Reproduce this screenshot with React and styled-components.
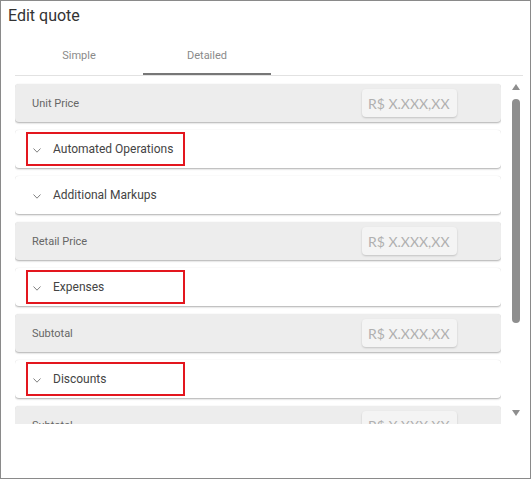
import React from "react";
import styled, { createGlobalStyle } from "styled-components";

const Global = createGlobalStyle`
  html, body { margin: 0; padding: 0; background: #fff; }
  body { font-family: Roboto, "Noto Sans", Arial, sans-serif; }
  * { box-sizing: border-box; }
`;

const Dialog = styled.div`
  width: 531px;
  height: 479px;
  border: 1px solid #8a8a8a;
  background: #fff;
  display: flex;
  flex-direction: column;
`;

const Title = styled.h2`
  margin: 0;
  padding: 5px 0 0 7px;
  height: 34px;
  font-size: 16px;
  line-height: 20px;
  font-weight: 400;
  color: #333;
`;

const TabStrip = styled.div`
  display: flex;
  margin: 0 7px 0 14px;
  border-bottom: 1px solid #e2e2e2;
`;

const Tab = styled.div`
  position: relative;
  width: 128px;
  height: 40px;
  display: flex;
  align-items: center;
  justify-content: center;
  font-size: 11px;
  color: #8a8a8a;
  &::after {
    content: "";
    position: absolute;
    left: 0;
    right: 0;
    bottom: 0;
    height: 2px;
    background: ${(p) => (p.$active ? "#777" : "transparent")};
  }
`;

const Body = styled.div`
  display: flex;
  height: 348px;
  margin: 0 6px 0 14px;
  gap: 7px;
`;

const List = styled.div`
  width: 486px;
  overflow: hidden;
  padding-top: 8px;
  display: flex;
  flex-direction: column;
  gap: 8px;
`;

const Row = styled.div`
  flex: 0 0 38px;
  height: 38px;
  border-radius: 4px;
  background: ${(p) => (p.$gray ? "#ededed" : "#fff")};
  box-shadow: 0 1px 2px rgba(0, 0, 0, 0.32), 0 0 1px rgba(0, 0, 0, 0.07);
  display: flex;
  align-items: center;
`;

const PriceRow = styled(Row)`
  justify-content: space-between;
  padding: 0 44px 0 17px;
`;

const Label = styled.span`
  font-size: 11px;
  color: #666;
`;

const PriceBox = styled.div`
  width: 95px;
  height: 28px;
  border-radius: 4px;
  background: #f4f4f4;
  box-shadow: 0 1px 2px rgba(0, 0, 0, 0.18);
  display: flex;
  align-items: center;
  padding-left: 6px;
  font-family: Lato, "Open Sans", sans-serif;
  font-size: 14px;
  color: #b0b0b0;
  white-space: nowrap;
  overflow: hidden;
`;

const Summary = styled.div`
  margin-left: 11px;
  width: 159px;
  height: 34px;
  border: 2px solid ${(p) => (p.$highlight ? "#e3161e" : "transparent")};
  display: flex;
  align-items: center;
  padding-left: 5px;
  gap: 12px;
`;

const Chevron = styled.svg`
  width: 8px;
  height: 5px;
  margin-top: 3px;
  flex: 0 0 auto;
`;

const SummaryText = styled.span`
  font-size: 12px;
  color: #444;
  white-space: nowrap;
`;

const Scrollbar = styled.div`
  width: 16px;
  display: flex;
  flex-direction: column;
  align-items: center;
  padding: 8px 0 8px;
`;

const Arrow = styled.svg`
  width: 8px;
  height: 6px;
  flex: 0 0 auto;
`;

const Thumb = styled.div`
  width: 8px;
  height: 224px;
  margin-top: 9px;
  border-radius: 4px;
  background: #8e8e8e;
`;

const Spacer = styled.div`
  flex: 1;
`;

const Price = ({ label }) => (
  <PriceRow $gray>
    <Label>{label}</Label>
    <PriceBox>R$ X.XXX,XX</PriceBox>
  </PriceRow>
);

const Accordion = ({ label, highlight }) => (
  <Row>
    <Summary $highlight={highlight}>
      <Chevron viewBox="0 0 8 5">
        <polyline points="0.5,0.5 4,4.2 7.5,0.5" fill="none" stroke="#808080" strokeWidth="1" />
      </Chevron>
      <SummaryText>{label}</SummaryText>
    </Summary>
  </Row>
);

export default function App() {
  return (
    <>
      <Global />
      <Dialog>
        <Title>Edit quote</Title>
        <TabStrip>
          <Tab>Simple</Tab>
          <Tab $active>Detailed</Tab>
        </TabStrip>
        <Body>
          <List>
            <Price label="Unit Price" />
            <Accordion label="Automated Operations" highlight />
            <Accordion label="Additional Markups" />
            <Price label="Retail Price" />
            <Accordion label="Expenses" highlight />
            <Price label="Subtotal" />
            <Accordion label="Discounts" highlight />
            <Price label="Subtotal" />
          </List>
          <Scrollbar>
            <Arrow viewBox="0 0 8 6">
              <polygon points="4,0 8,6 0,6" fill="#8e8e8e" />
            </Arrow>
            <Thumb />
            <Spacer />
            <Arrow viewBox="0 0 8 6">
              <polygon points="0,0 8,0 4,6" fill="#8e8e8e" />
            </Arrow>
          </Scrollbar>
        </Body>
      </Dialog>
    </>
  );
}
